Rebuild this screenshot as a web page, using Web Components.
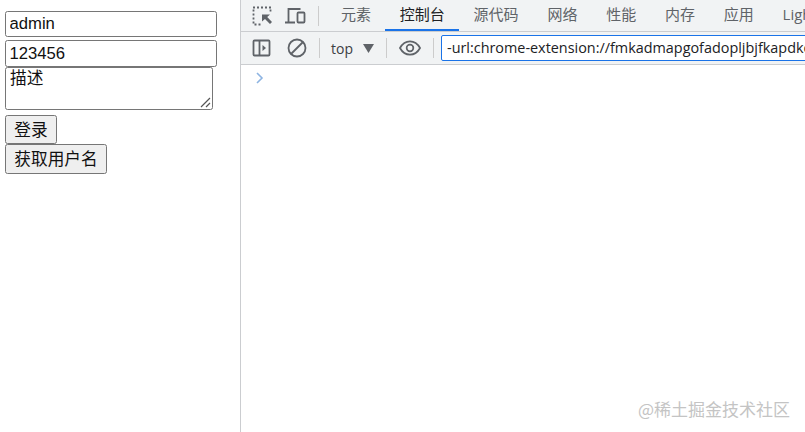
<!DOCTYPE html>
<html lang="zh"><head><meta charset="utf-8"><title>登录</title>
<style>
html,body{margin:0;padding:0;background:#fff;height:100%;overflow:hidden}
body{width:805px;height:432px;display:flex;font-family:"Liberation Sans","Noto Sans CJK SC",sans-serif}
</style></head><body>
<login-pane></login-pane>
<dev-tools></dev-tools>
<water-mark>@稀土掘金技术社区</water-mark>
<script>
const CJK='"Noto Sans CJK SC",sans-serif';
function def(name,html){customElements.define(name,class extends HTMLElement{constructor(){super();this.attachShadow({mode:'open'}).innerHTML=html}})}
def('login-pane',`<style>
:host{display:flex;flex-direction:column;align-items:flex-start;box-sizing:border-box;width:240px;padding:11px 0 0 5px;flex:none}
.f{box-sizing:border-box;font:16.67px "Liberation Sans",${CJK};color:#111;background:#fff;border:1px solid #767676;border-radius:2.5px;margin:0;padding:0 3.5px;outline:0;display:block}
input.f{width:212px}
#u{height:26px;margin-bottom:3px;padding-bottom:1px}
#p{height:27px}
.ta{position:relative;margin-bottom:5px;height:43px;line-height:0}
textarea.f{width:208px;height:43px;line-height:22px;resize:none;padding:0 4px}
.ta svg{position:absolute;right:2px;bottom:2px}
button{box-sizing:border-box;font:16.67px/1 "Liberation Sans",${CJK};color:#111;background:#efefef;border:1px solid #767676;border-radius:2.5px;padding:0;margin:0;display:block;white-space:nowrap}
#a{width:52px;height:29px;padding-top:3px}#b{width:102px;height:30px;padding-top:2px}
</style>
<input class="f" id="u" value="admin"><input class="f" id="p" value="123456">
<div class="ta"><textarea class="f">描述</textarea><svg width="11" height="11" viewBox="0 0 11 11" fill="none" stroke="#555" stroke-width="1.200"><path d="M1 10L10 1M6 10l4-4"/></svg></div>
<button id="a">登录</button><button id="b">获取用户名</button>`);

def('dt-tab',`<style>
:host{display:flex;align-items:center;justify-content:center;box-sizing:border-box;height:31px;padding:0 14.4px 3px;font:15px/20px ${CJK};color:#5f6368;flex:none;white-space:nowrap}
:host([active]){color:#202124;border-bottom:2px solid #1a73e8;padding-bottom:1px}
</style><slot></slot>`);

def('dt-sep',`<style>:host{display:block;width:1px;height:20px;background:#ccc;flex:none}</style>`);

def('dt-tabbar',`<style>
:host{display:flex;align-items:center;box-sizing:border-box;height:32px;background:#f1f3f4;border-bottom:1px solid #cbcdd0;flex:none;overflow:hidden}
svg{flex:none;display:block}
.i1{margin-left:11px}.i2{margin-left:13px}
dt-sep{margin:0 7.6px 0 12px}
.l{font-family:"Open Sans",sans-serif}
</style>
<svg class="i1" width="20" height="20" viewBox="0 0 20 20" fill="none" stroke="#5f6368" stroke-width="1.800"><path d="M1 1.500H19M1.500 3.500V18.500H9M18.500 3.500V7" stroke-dasharray="2 2"/><path d="M10 8.500h8l-2.800 2.500L20 16l-2 2-5-5-3 2.500z" fill="#5f6368" stroke="none"/></svg>
<svg class="i2" width="21" height="20" viewBox="0 0 21 20" fill="none" stroke="#5f6368" stroke-width="1.800"><path d="M3.500 16V3h12M0 16.500h10"/><rect x="12.500" y="6.500" width="7" height="10" rx="1"/></svg>
<dt-sep></dt-sep>
<dt-tab>元素</dt-tab><dt-tab active>控制台</dt-tab>
<dt-tab>源代码</dt-tab><dt-tab>网络</dt-tab><dt-tab>性能</dt-tab><dt-tab>内存</dt-tab><dt-tab>应用</dt-tab><dt-tab class="l">Lighthouse</dt-tab>`);

def('dt-filterbar',`<style>
:host{display:flex;align-items:center;box-sizing:border-box;height:33px;background:#f1f3f4;border-bottom:1px solid #cbcdd0;flex:none;overflow:hidden}
svg{flex:none;display:block}
.top{font:14px "Open Sans",sans-serif;color:#3c4043;margin-left:11px;flex:none;width:23px}
.caret{margin-left:9px}
.box{box-sizing:border-box;flex:none;width:400px;height:26px;margin-left:7px;background:#fff;border:1.500px solid #1a73e8;border-radius:2px;padding:0 5px;font:14.400px/23px "Open Sans",sans-serif;color:#202124;white-space:nowrap;overflow:hidden}
</style>
<svg style="margin-left:11px" width="20" height="20" viewBox="0 0 20 20" fill="none" stroke="#5f6368" stroke-width="1.800"><rect x="1.500" y="2.500" width="16" height="15" rx="1"/><path d="M7.500 2.500v15"/><path d="M10.500 7l3.500 3-3.500 3z" fill="#5f6368" stroke="none"/></svg>
<svg style="margin-left:15px" width="20" height="20" viewBox="0 0 20 20" fill="none" stroke="#5f6368" stroke-width="1.800"><circle cx="10" cy="10" r="8.500"/><path d="M4 16L16 4"/></svg>
<dt-sep style="margin-left:12px"></dt-sep>
<span class="top">top</span>
<svg class="caret" width="11" height="9" viewBox="0 0 11 9"><path d="M0 0h11L5.500 9z" fill="#5f6368"/></svg>
<dt-sep style="margin-left:12px"></dt-sep>
<svg style="margin-left:12px" width="22" height="16" viewBox="0 0 23 16" fill="none" stroke="#5f6368" stroke-width="1.800"><path d="M1 8c2.500-4.500 6-7 10.500-7S19.500 3.500 22 8c-2.500 4.500-6 7-10.500 7S3.500 12.500 1 8z"/><circle cx="11.500" cy="8" r="3.500"/></svg>
<dt-sep style="margin-left:12px"></dt-sep>
<div class="box">-url:chrome-extension://fmkadmapgofadopljbjfkapdkoienihi</div>`);

def('dev-tools',`<style>
:host{display:flex;flex-direction:column;box-sizing:border-box;flex:1;min-width:0;border-left:1px solid #cbcdd0;background:#fff}
.prompt{padding:7px 0 0 14px}
svg{display:block}
</style>
<dt-tabbar></dt-tabbar><dt-filterbar></dt-filterbar>
<div class="prompt"><svg width="10" height="12" viewBox="0 0 10 12" fill="none" stroke="#8db4e2" stroke-width="1.600"><path d="M2 1l5 5-5 5"/></svg></div>`);

def('water-mark',`<style>
:host{position:absolute;right:15px;top:398px;font:17px/22px ${CJK};color:#c4c4c4;white-space:nowrap}
</style><slot></slot>`);
</script>
</body></html>
